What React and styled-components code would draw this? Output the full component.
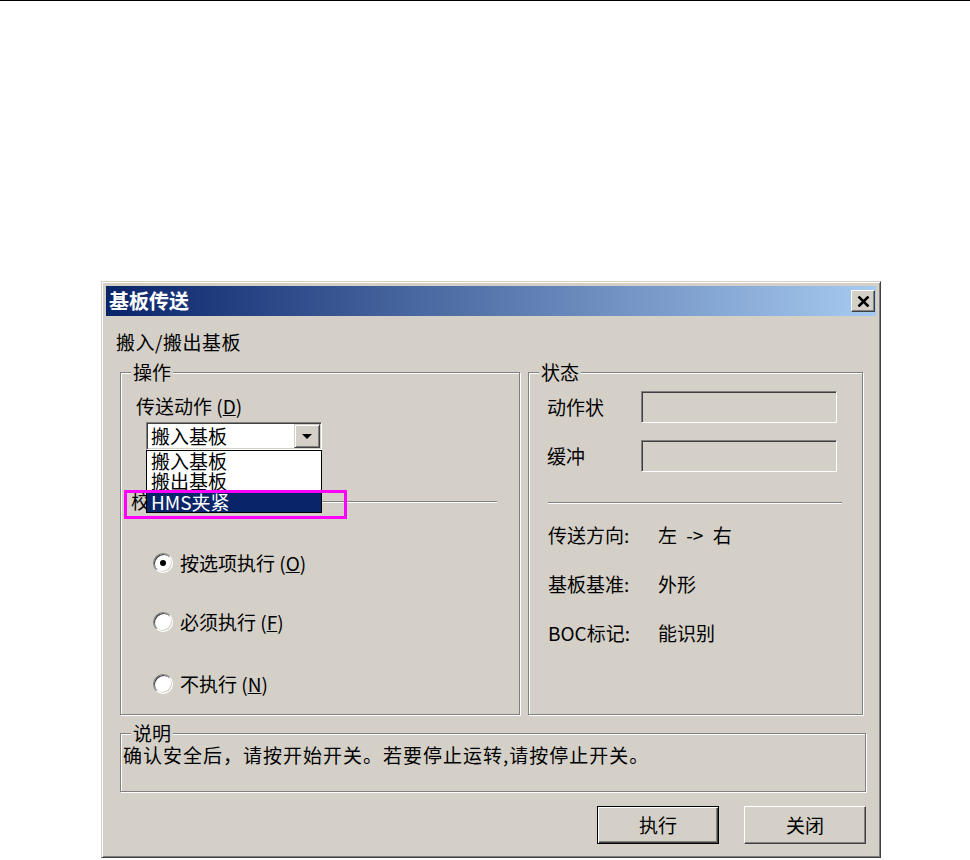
import React from 'react';
import styled, { createGlobalStyle } from 'styled-components';

const FONT = `"Noto Sans CJK SC", "Noto Sans CJK JP", "Noto Sans", sans-serif`;

const GlobalStyle = createGlobalStyle`
  html, body { margin: 0; padding: 0; background: #fff; }
  body { font-family: ${FONT}; }
`;

const TopRule = styled.div`
  height: 1px;
  background: #000;
`;

const Stage = styled.div`
  padding: 280px 0 0 101px;
`;

const Dialog = styled.div`
  box-sizing: border-box;
  width: 780px;
  height: 577px;
  background: #d4d0c8;
  border: 1px solid;
  border-color: #d4d0c8 #404040 #404040 #d4d0c8;
  box-shadow: inset 1px 1px 0 #fff, inset -1px -1px 0 #808080;
  padding: 4px;
  display: flex;
  flex-direction: column;
  font-family: ${FONT};
  font-size: 19px;
  color: #000;
`;

const TitleBar = styled.div`
  height: 30px;
  flex: none;
  display: flex;
  align-items: center;
  justify-content: space-between;
  padding: 0 1px 0 3px;
  background: linear-gradient(to right, #0a246a, #a6caf0);
`;

const TitleText = styled.span`
  color: #fff;
  font-weight: bold;
  font-size: 20px;
  line-height: 22px;
`;

const CloseButton = styled.div`
  box-sizing: border-box;
  width: 24px;
  height: 22px;
  background: #d4d0c8;
  border: 1px solid;
  border-color: #fff #404040 #404040 #fff;
  box-shadow: inset -1px -1px 0 #808080;
  display: flex;
  align-items: center;
  justify-content: center;
`;

const Body = styled.div`
  display: flex;
  flex-direction: column;
  padding: 0 10px;
`;

const Caption = styled.div`
  margin-top: 16px;
  line-height: 20px;
  letter-spacing: 0.5px;
`;

const GroupsRow = styled.div`
  display: flex;
  gap: 8px;
  margin: 20px 0 0 4px;
`;

const Group = styled.div`
  box-sizing: border-box;
  width: ${p => p.$w}px;
  height: ${p => p.$h}px;
  margin-top: ${p => p.$mt || 0}px;
  margin-left: ${p => p.$ml || 0}px;
  border: 1px solid #808080;
  box-shadow: inset 1px 1px 0 #fff, 1px 1px 0 #fff;
  display: flex;
  flex-direction: column;
`;

const GroupLabel = styled.div`
  align-self: flex-start;
  margin: -11px 0 0 10px;
  padding: 0 2px;
  background: #d4d0c8;
  line-height: 20px;
`;

const FieldLabel = styled.div`
  margin: 14px 0 0 15px;
  line-height: 20px;
`;

const ComboWrap = styled.div`
  position: relative;
  width: 176px;
  height: 28px;
  margin: 6px 0 0 25px;
`;

const ComboBox = styled.div`
  box-sizing: border-box;
  height: 100%;
  background: #fff;
  border: 1px solid;
  border-color: #808080 #fff #fff #808080;
  box-shadow: inset 1px 1px 0 #404040, inset -1px -1px 0 #d4d0c8;
  padding: 1px 1px 1px 4px;
  display: flex;
  align-items: center;
  justify-content: space-between;
`;

const ComboText = styled.span`
  line-height: 20px;
`;

const ArrowButton = styled.div`
  box-sizing: border-box;
  width: 26px;
  height: 24px;
  background: #d4d0c8;
  border: 1px solid;
  border-color: #d4d0c8 #404040 #404040 #d4d0c8;
  box-shadow: inset 1px 1px 0 #fff, inset -1px -1px 0 #808080;
  display: flex;
  align-items: center;
  justify-content: center;
`;

const Triangle = styled.span`
  width: 0;
  height: 0;
  border-left: 5px solid transparent;
  border-right: 5px solid transparent;
  border-top: 5px solid #000;
  margin-top: 1px;
`;

const DropList = styled.div`
  position: absolute;
  top: 28px;
  left: 0;
  width: 176px;
  box-sizing: border-box;
  border: 1px solid #000;
  background: #fff;
  z-index: 2;
`;

const ListItem = styled.div`
  height: ${p => p.$h}px;
  line-height: ${p => p.$h}px;
  padding-left: 4px;
  background: ${p => (p.$selected ? '#0a246a' : '#fff')};
  color: ${p => (p.$selected ? '#fff' : '#000')};
  white-space: nowrap;
`;

const Highlight = styled.div`
  position: absolute;
  left: -22px;
  top: 68px;
  width: 223px;
  height: 29px;
  box-sizing: border-box;
  border: 3px solid #ff00ff;
  z-index: 3;
  pointer-events: none;
`;

const SubHeader = styled.div`
  display: flex;
  align-items: center;
  height: 20px;
  margin: 41px 22px 0 10px;
`;

const SubHeaderText = styled.span`
  line-height: 20px;
  padding-right: 4px;
`;

const EtchedLine = styled.div`
  flex: ${p => (p.$fill ? 1 : 'none')};
  height: 1px;
  background: #808080;
  box-shadow: 0 1px 0 #fff;
  margin: ${p => p.$m || '0'};
`;

const RadioRow = styled.div`
  display: flex;
  align-items: center;
  gap: 7px;
  margin: ${p => p.$mt}px 0 0 32px;
  line-height: 20px;
`;

const RadioCircle = styled.span`
  box-sizing: border-box;
  width: 20px;
  height: 20px;
  border-radius: 50%;
  background: #fff;
  border: 1px solid;
  border-color: #808080 #fff #fff #808080;
  box-shadow: inset 1px 1px 0 #404040, inset -1px -1px 0 #d4d0c8;
  display: flex;
  align-items: center;
  justify-content: center;
  &::after {
    content: '';
    width: 6px;
    height: 6px;
    border-radius: 50%;
    background: ${p => (p.$checked ? '#000' : 'transparent')};
  }
`;

const StatusRow = styled.div`
  display: flex;
  align-items: center;
  margin: ${p => p.$mt}px 0 0 18px;
`;

const StatusLabel = styled.span`
  width: 94px;
  line-height: 20px;
`;

const StatusBox = styled.div`
  box-sizing: border-box;
  width: 196px;
  height: 32px;
  background: #d4d0c8;
  border: 1px solid;
  border-color: #808080 #fff #fff #808080;
  box-shadow: inset 1px 1px 0 #404040, inset -1px -1px 0 #d4d0c8;
`;

const InfoRow = styled.div`
  display: flex;
  margin: ${p => p.$mt}px 0 0 19px;
  line-height: 20px;
`;

const InfoLabel = styled.span`
  width: 110px;
`;

const InfoValue = styled.span`
  word-spacing: 5px;
`;

const NoteText = styled.div`
  margin: 2px 0 0 2px;
  line-height: 20px;
  letter-spacing: 1px;
  white-space: nowrap;
`;

const ButtonRow = styled.div`
  display: flex;
  justify-content: flex-end;
  gap: 25px;
  margin-top: 14px;
`;

const PushButton = styled.div`
  box-sizing: border-box;
  width: 122px;
  height: 38px;
  background: #d4d0c8;
  display: flex;
  align-items: center;
  justify-content: center;
  line-height: 20px;
  border: 1px solid;
  border-color: ${p => (p.$default ? '#000' : '#fff #404040 #404040 #fff')};
  box-shadow: ${p =>
    p.$default
      ? 'inset 1px 1px 0 #fff, inset -1px -1px 0 #404040, inset -2px -2px 0 #808080'
      : 'inset -1px -1px 0 #808080'};
`;

const Mnemonic = ({ k }) => (
  <>
    (<u>{k}</u>)
  </>
);

export default function App() {
  return (
    <>
      <GlobalStyle />
      <TopRule />
      <Stage>
        <Dialog>
          <TitleBar>
            <TitleText>基板传送</TitleText>
            <CloseButton>
              <svg width="13" height="11" viewBox="0 0 13 11">
                <path d="M1.5 0.5 L11.5 10.5 M11.5 0.5 L1.5 10.5" stroke="#000" strokeWidth="2.6" />
              </svg>
            </CloseButton>
          </TitleBar>
          <Body>
            <Caption>搬入/搬出基板</Caption>
            <GroupsRow>
              <Group $w={400} $h={343}>
                <GroupLabel>操作</GroupLabel>
                <FieldLabel>
                  传送动作 <Mnemonic k="D" />
                </FieldLabel>
                <ComboWrap>
                  <ComboBox>
                    <ComboText>搬入基板</ComboText>
                    <ArrowButton>
                      <Triangle />
                    </ArrowButton>
                  </ComboBox>
                  <DropList>
                    <ListItem $h={20}>搬入基板</ListItem>
                    <ListItem $h={20}>搬出基板</ListItem>
                    <ListItem $h={21} $selected>
                      HMS夹紧
                    </ListItem>
                  </DropList>
                  <Highlight />
                </ComboWrap>
                <SubHeader>
                  <SubHeaderText>校验执行</SubHeaderText>
                  <EtchedLine $fill />
                </SubHeader>
                <RadioRow $mt={42}>
                  <RadioCircle $checked />
                  <span>
                    按选项执行 <Mnemonic k="O" />
                  </span>
                </RadioRow>
                <RadioRow $mt={39}>
                  <RadioCircle />
                  <span>
                    必须执行 <Mnemonic k="F" />
                  </span>
                </RadioRow>
                <RadioRow $mt={42}>
                  <RadioCircle />
                  <span>
                    不执行 <Mnemonic k="N" />
                  </span>
                </RadioRow>
              </Group>
              <Group $w={335} $h={343}>
                <GroupLabel>状态</GroupLabel>
                <StatusRow $mt={9}>
                  <StatusLabel>动作状</StatusLabel>
                  <StatusBox />
                </StatusRow>
                <StatusRow $mt={17}>
                  <StatusLabel>缓冲</StatusLabel>
                  <StatusBox />
                </StatusRow>
                <EtchedLine $m="30px 20px 0 19px" />
                <InfoRow $mt={22}>
                  <InfoLabel>传送方向:</InfoLabel>
                  <InfoValue>左 -&gt; 右</InfoValue>
                </InfoRow>
                <InfoRow $mt={29}>
                  <InfoLabel>基板基准:</InfoLabel>
                  <InfoValue>外形</InfoValue>
                </InfoRow>
                <InfoRow $mt={29}>
                  <InfoLabel>BOC标记:</InfoLabel>
                  <InfoValue>能识别</InfoValue>
                </InfoRow>
              </Group>
            </GroupsRow>
            <Group $w={746} $h={59} $mt={18} $ml={4}>
              <GroupLabel>说明</GroupLabel>
              <NoteText>确认安全后，请按开始开关。若要停止运转,请按停止开关。</NoteText>
            </Group>
            <ButtonRow>
              <PushButton $default>执行</PushButton>
              <PushButton>关闭</PushButton>
            </ButtonRow>
          </Body>
        </Dialog>
      </Stage>
    </>
  );
}
